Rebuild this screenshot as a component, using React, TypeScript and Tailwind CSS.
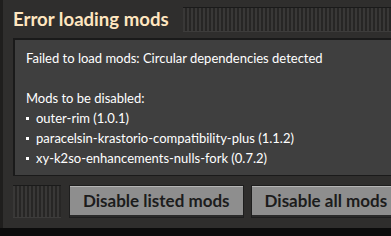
const mods = [
  "outer-rim (1.0.1)",
  "paracelsin-krastorio-compatibility-plus (1.1.2)",
  "xy-k2so-enhancements-nulls-fork (0.7.2)",
];

function Dragger({ className }: { className: string }) {
  return (
    <div
      className={`bg-[repeating-linear-gradient(90deg,#393837_0px,#393837_2px,#272625_2px,#272625_4px)] shadow-[inset_0_1px_0_#1a1a1a,inset_0_-1px_0_#3d3c3b] ${className}`}
    />
  );
}

function FactorioButton({ label }: { label: string }) {
  return (
    <button className="h-[31px] shrink-0 whitespace-nowrap border-b-2 border-b-[#2a2a2a] border-t border-t-[#b5b5b5] bg-[#8e8e8e] px-[13px] text-left text-[17px] font-bold leading-none text-[#1c1c1c] shadow-[0_0_0_1px_#1e1e1e]">
      {label}
    </button>
  );
}

export default function App() {
  return (
    <div className="h-[236px] w-[391px] overflow-hidden bg-[#0c0c0c] font-['Lato',sans-serif]">
      <div className="flex h-[228px] flex-col border-l-[3px] border-l-[#1f1e1d] bg-[#2f2e2d] pl-[10px]">
        <div className="flex h-[38px] shrink-0 items-center gap-[14px]">
          <h1 className="shrink-0 text-[18.6px] font-bold leading-none text-[#ffe6c0]">
            Error loading mods
          </h1>
          <Dragger className="-mr-2 h-[25px] flex-1" />
        </div>
        <div className="-mr-4 h-[138px] shrink-0 border-l-2 border-t-2 border-b border-[#1a1a1a] bg-[#3f3f3f] pl-[11px] pt-[8px] text-[13px] leading-[20px] text-white">
          <p>Failed to load mods: Circular dependencies detected</p>
          <p>&nbsp;</p>
          <p>Mods to be disabled:</p>
          {mods.map((m) => (
            <p key={m} className="flex items-center">
              <span className="mr-[7px] inline-block size-[3px] bg-white" />
              {m}
            </p>
          ))}
        </div>
        <div className="flex flex-1 items-center gap-[9px] pb-[2px]">
          <Dragger className="h-[33px] w-[48px] shrink-0" />
          <FactorioButton label="Disable listed mods" />
          <FactorioButton label="Disable all mods" />
        </div>
      </div>
    </div>
  );
}
